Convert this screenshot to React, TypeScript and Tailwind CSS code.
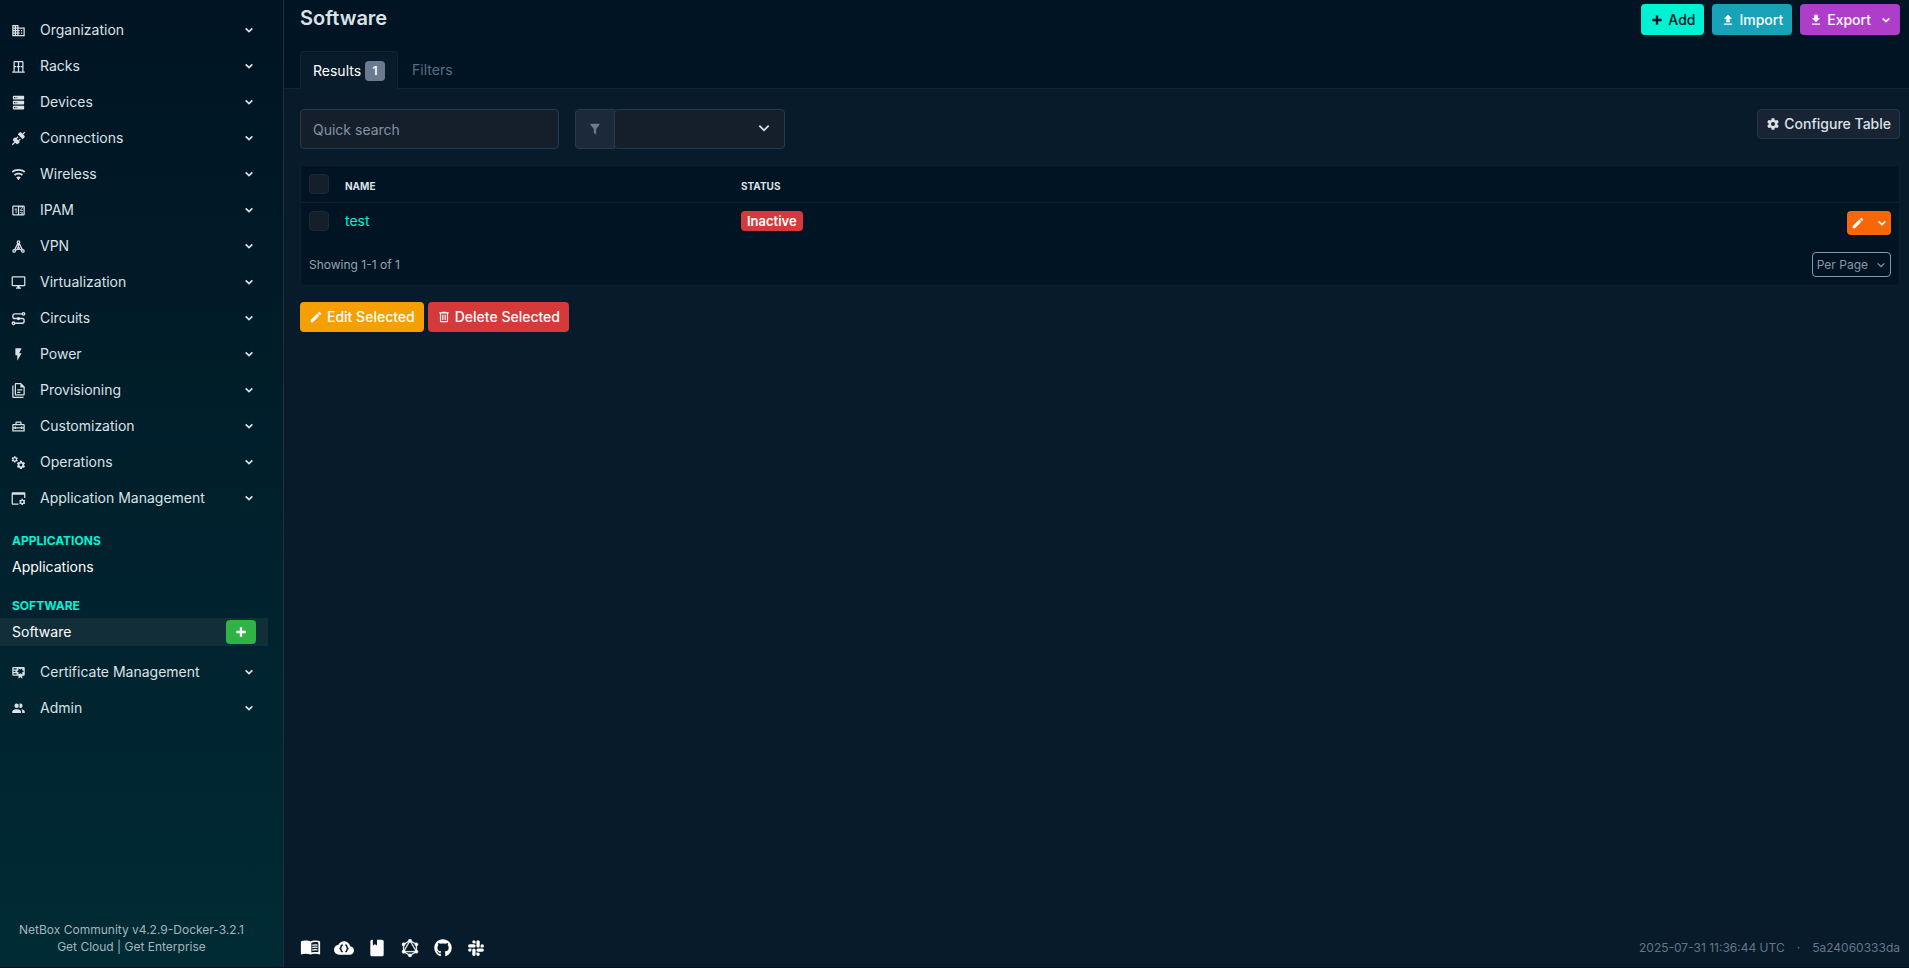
import React from 'react';
import { SiGraphql } from 'react-icons/si';
import { FaGithub, FaSlack } from 'react-icons/fa';

const COG =
  'M12,15.5A3.5,3.5 0 0,1 8.5,12A3.5,3.5 0 0,1 12,8.5A3.5,3.5 0 0,1 15.5,12A3.5,3.5 0 0,1 12,15.5M19.43,12.97C19.47,12.65 19.5,12.33 19.5,12C19.5,11.67 19.47,11.34 19.43,11L21.54,9.37C21.73,9.22 21.78,8.95 21.66,8.73L19.66,5.27C19.54,5.05 19.27,4.96 19.05,5.05L16.56,6.05C16.04,5.66 15.5,5.32 14.87,5.07L14.5,2.42C14.46,2.18 14.25,2 14,2H10C9.75,2 9.54,2.18 9.5,2.42L9.13,5.07C8.5,5.32 7.96,5.66 7.44,6.05L4.95,5.05C4.73,4.96 4.46,5.05 4.34,5.27L2.34,8.73C2.21,8.95 2.27,9.22 2.46,9.37L4.57,11C4.53,11.34 4.5,11.67 4.5,12C4.5,12.33 4.53,12.65 4.57,12.97L2.46,14.63C2.27,14.78 2.21,15.05 2.34,15.27L4.34,18.73C4.46,18.95 4.73,19.03 4.95,18.95L7.44,17.94C7.96,18.34 8.5,18.68 9.13,18.93L9.5,21.58C9.54,21.82 9.75,22 10,22H14C14.25,22 14.46,21.82 14.5,21.58L14.87,18.93C15.5,18.67 16.04,18.34 16.56,17.94L19.05,18.95C19.27,19.03 19.54,18.95 19.66,18.73L21.66,15.27C21.78,15.05 21.73,14.78 21.54,14.63L19.43,12.97Z';

const icons: Record<string, React.ReactNode> = {
  domain: <path d="M18,15H16V17H18M18,11H16V13H18M20,19H12V17H14V15H12V13H14V11H12V9H20M10,7H8V5H10M10,11H8V9H10M10,15H8V13H10M10,19H8V17H10M6,7H4V5H6M6,11H4V9H6M6,15H4V13H6M6,19H4V17H6M12,7V3H2V21H22V7H12Z" />,
  rack: <path fillRule="evenodd" d="M2 20H4V5C4 3.9 4.9 3 6 3H18C19.1 3 20 3.9 20 5V20H22V22H2V20M6 5V11H8V13H6V20H11V13H9V11H11V5H6M13 5V11H15V13H13V20H18V13H16V11H18V5H13Z" />,
  server: <path d="M4,1H20A1,1 0 0,1 21,2V6A1,1 0 0,1 20,7H4A1,1 0 0,1 3,6V2A1,1 0 0,1 4,1M4,9H20A1,1 0 0,1 21,10V14A1,1 0 0,1 20,15H4A1,1 0 0,1 3,14V10A1,1 0 0,1 4,9M4,17H20A1,1 0 0,1 21,18V22A1,1 0 0,1 20,23H4A1,1 0 0,1 3,22V18A1,1 0 0,1 4,17M9,5H10V3H9V5M9,13H10V11H9V13M9,21H10V19H9V21M5,3V5H7V3H5M5,11V13H7V11H5M5,19V21H7V19H5Z" />,
  connection: <path d="M21.4 7.5C22.2 8.3 22.2 9.6 21.4 10.3L18.6 13.1L10.8 5.3L13.6 2.5C14.4 1.7 15.7 1.7 16.4 2.5L18.2 4.3L21.2 1.3L22.6 2.7L19.6 5.7L21.4 7.5M15.6 13.3L14.2 11.9L11.4 14.7L9.3 12.6L12.1 9.8L10.7 8.4L7.9 11.2L6.4 9.8L3.6 12.6C2.8 13.4 2.8 14.7 3.6 15.4L5.4 17.2L1.4 21.2L2.8 22.6L6.8 18.6L8.6 20.4C9.4 21.2 10.7 21.2 11.4 20.4L14.2 17.6L12.8 16.2L15.6 13.3Z" />,
  wifi: <path d="M12,21L15.6,16.2C14.6,15.45 13.35,15 12,15C10.65,15 9.4,15.45 8.4,16.2L12,21M12,3C7.95,3 4.21,4.34 1.2,6.6L3,9C5.5,7.12 8.62,6 12,6C15.38,6 18.5,7.12 21,9L22.8,6.6C19.79,4.34 16.05,3 12,3M12,9C9.3,9 6.81,9.89 4.8,11.4L6.6,13.8C8.1,12.67 9.97,12 12,12C14.03,12 15.9,12.67 17.4,13.8L19.2,11.4C17.19,9.89 14.7,9 12,9Z" />,
  counter: <path d="M4,4H20A2,2 0 0,1 22,6V18A2,2 0 0,1 20,20H4A2,2 0 0,1 2,18V6A2,2 0 0,1 4,4M4,6V18H11V6H4M20,18V6H18.76C19,6.54 18.95,7.07 18.95,7.13C18.88,7.8 18.41,8.5 18.24,8.75L15.91,11.3L19.23,11.28L19.24,12.5L14.04,12.47L14,11.47C14,11.47 17.05,8.24 17.2,7.95C17.34,7.67 17.91,6 16.5,6C15.27,6.05 15.41,7.3 15.41,7.3L13.87,7.31C13.87,7.31 13.88,6.65 14.25,6H13V18H15.58L15.57,17.14L16.54,17.13C16.54,17.13 17.45,16.97 17.46,16.08C17.5,15.08 16.65,15.08 16.5,15.08C16.37,15.08 15.43,15.13 15.43,15.95H13.91C13.91,15.95 13.95,13.89 16.5,13.89C19.1,13.89 18.96,15.91 18.96,15.91C18.96,15.91 19,17.16 17.85,17.63L18.37,18H20M8.92,16H7.42V10.2L5.62,10.76V9.53L8.76,8.41H8.92V16Z" />,
  graph: (
    <g fill="none" stroke="currentColor" strokeWidth="2">
      <circle cx="12" cy="5" r="2" />
      <circle cx="5" cy="19" r="2" />
      <circle cx="12" cy="15" r="1.5" />
      <circle cx="19" cy="19" r="2" />
      <path d="M11 7L6 17M13 7L18 17M12 7V13.5M10.500 16L7 18.500M13.500 16L17 18.500" />
    </g>
  ),
  monitor: <path d="M21,16H3V4H21M21,2H3C1.89,2 1,2.89 1,4V16A2,2 0 0,0 3,18H10V20H8V22H16V20H14V18H21A2,2 0 0,0 23,16V4C23,2.89 22.1,2 21,2Z" />,
  transit: (
    <g fill="none" stroke="currentColor" strokeWidth="2.2">
      <circle cx="20" cy="4.5" r="2" />
      <circle cx="4" cy="19.5" r="2" />
      <circle cx="12" cy="12" r="1.5" />
      <path d="M18 4.5H6A3 3 0 0 0 3 7.5V9A3 3 0 0 0 6 12H18A3 3 0 0 1 21 15V16.5A3 3 0 0 1 18 19.5H6" />
    </g>
  ),
  flash: <path d="M7,2V13H10V22L17,10H13L17,2H7Z" />,
  documents: <path d="M16 0H8C6.9 0 6 .9 6 2V18C6 19.1 6.9 20 8 20H20C21.1 20 22 19.1 22 18V6L16 0M20 18H8V2H15V7H20V18M4 4V22H20V24H4C2.9 24 2 23.1 2 22V4H4M10 10V12H18V10H10M10 14V16H15V14H10Z" />,
  toolbox: <path d="M20 8H17V6C17 4.9 16.11 4 15 4H9C7.9 4 7 4.9 7 6V8H4C2.9 8 2 8.9 2 10V20H22V10C22 8.9 21.11 8 20 8M9 6H15V8H9V6M20 18H4V15H6V16H8V15H16V16H18V15H20V18M18 13V12H16V13H8V12H6V13H4V10H20V13H18Z" />,
  cogs: (
    <>
      <path transform="translate(0 1) scale(.5)" d={COG} />
      <path transform="translate(8 8) scale(.66)" d={COG} />
    </>
  ),
  appCog: (
    <>
      <path d="M21 2H3C1.9 2 1 2.9 1 4V20C1 21.1 1.9 22 3 22H12V20H3V6H21V11H23V4C23 2.9 22.1 2 21 2Z" />
      <path transform="translate(12 11.5) scale(.5)" d={COG} />
    </>
  ),
  certificate: <path d="M4,3C2.89,3 2,3.89 2,5V15A2,2 0 0,0 4,17H12V22L15,19L18,22V17H20A2,2 0 0,0 22,15V8L22,6V5A2,2 0 0,0 20,3H16V3H4M12,5L15,7L18,5V8.5L21,10L18,11.5V15L15,13L12,15V11.5L9,10L12,8.5V5M4,5H9V7H4V5M4,9H7V11H4V9M4,13H9V15H4V13Z" />,
  accounts: <path d="M16 17V19H2V17S2 13 9 13 16 17 16 17M12.5 7.5A3.5 3.5 0 1 0 9 11A3.5 3.5 0 0 0 12.5 7.5M15.94 13A5.32 5.32 0 0 1 18 17V19H22V17S22 13.37 15.94 13M15 4A3.39 3.39 0 0 0 13.07 4.59A5 5 0 0 1 13.07 10.41A3.39 3.39 0 0 0 15 11A3.5 3.5 0 0 0 15 4Z" />,
  plus: <path d="M20 14H14V20H10V14H4V10H10V4H14V10H20V14Z" />,
  upload: <path d="M9,16V10H5L12,3L19,10H15V16H9M5,20V18H19V20H5Z" />,
  download: <path d="M5,20H19V18H5M19,9H15V3H9V9H5L12,16L19,9Z" />,
  pencil: <path d="M20.71,7.04C21.1,6.65 21.1,6 20.71,5.63L18.37,3.29C18,2.9 17.35,2.9 16.96,3.29L15.12,5.12L18.87,8.87M3,17.25V21H6.75L17.81,9.93L14.06,6.18L3,17.25Z" />,
  trash: <path d="M9,3V4H4V6H5V19A2,2 0 0,0 7,21H17A2,2 0 0,0 19,19V6H20V4H15V3H9M7,6H17V19H7V6M9,8V17H11V8H9M13,8V17H15V8H13Z" />,
  filter: <path d="M14,12V19.88C14.04,20.18 13.94,20.5 13.71,20.71C13.32,21.1 12.69,21.1 12.3,20.71L10.29,18.7C10.06,18.47 9.96,18.16 10,17.87V12H9.97L4.21,4.62C3.87,4.19 3.95,3.56 4.38,3.22C4.57,3.08 4.78,3 5,3H19C19.22,3 19.43,3.08 19.62,3.22C20.05,3.56 20.13,4.19 19.79,4.62L14.03,12H14Z" />,
  cog: <path d={COG} />,
  chevron: <path fill="none" stroke="currentColor" strokeWidth="4" d="M4 8L12 16L20 8" />,
  chevronThin: <path fill="none" stroke="currentColor" strokeWidth="3" d="M4 8L12 16L20 8" />,
  bookOpen: (
    <>
      <path fillRule="evenodd" d="M12 5C9.5 3.5 4 3.5 1 5V20C4 18.7 9 18.7 12 20C15 18.7 20 18.7 23 20V5C20 3.5 14.5 3.5 12 5M13 6.5C15 5.6 19 5.6 21 6.3V17.4C19 16.8 15 17 13 17.7V6.5Z" />
      <path fill="none" stroke="currentColor" strokeWidth="1.5" d="M14 9.5C16 8.8 18 8.8 20 9.2M14 12.2C16 11.5 18 11.5 20 11.9M14 14.9C16 14.2 18 14.2 20 14.6" />
    </>
  ),
  cloudBraces: (
    <>
      <path d="M19.35 10.04C18.67 6.59 15.64 4 12 4C9.11 4 6.61 5.64 5.36 8.04C2.34 8.36 0 10.91 0 14A6 6 0 0 0 6 20H19A5 5 0 0 0 24 15C24 12.36 21.95 10.22 19.35 10.04Z" />
      <path fill="none" stroke="#071b2a" strokeWidth="1.8" d="M10.5 8.5C8.5 8.5 8.5 9.5 8.5 10.5C8.5 12 8 12.5 6.5 12.5C8 12.5 8.5 13 8.5 14.5C8.5 15.5 8.5 16.5 10.5 16.5M13.5 8.5C15.5 8.5 15.5 9.5 15.5 10.5C15.5 12 16 12.5 17.5 12.5C16 12.5 15.5 13 15.5 14.5C15.5 15.5 15.5 16.5 13.5 16.5" />
    </>
  ),
  book: <path d="M18,22A2,2 0 0,0 20,20V4C20,2.89 19.1,2 18,2H12V9L9.5,7.5L7,9V2H6A2,2 0 0,0 4,4V20A2,2 0 0,0 6,22H18Z" />,
};

const Icon: React.FC<{ name: string; className?: string }> = ({ name, className = 'size-3.5' }) => (
  <svg viewBox="0 0 24 24" fill="currentColor" aria-hidden="true" className={`shrink-0 ${className}`}>
    {icons[name]}
  </svg>
);

const mainMenu = [
  { label: 'Organization', icon: 'domain' },
  { label: 'Racks', icon: 'rack' },
  { label: 'Devices', icon: 'server' },
  { label: 'Connections', icon: 'connection' },
  { label: 'Wireless', icon: 'wifi' },
  { label: 'IPAM', icon: 'counter' },
  { label: 'VPN', icon: 'graph' },
  { label: 'Virtualization', icon: 'monitor' },
  { label: 'Circuits', icon: 'transit' },
  { label: 'Power', icon: 'flash' },
  { label: 'Provisioning', icon: 'documents' },
  { label: 'Customization', icon: 'toolbox' },
  { label: 'Operations', icon: 'cogs' },
  { label: 'Application Management', icon: 'appCog' },
];

const bottomMenu = [
  { label: 'Certificate Management', icon: 'certificate' },
  { label: 'Admin', icon: 'accounts' },
];

const MenuItem: React.FC<{ label: string; icon: string }> = ({ label, icon }) => (
  <button type="button" className="flex h-9 w-full items-center gap-3.5 pr-[29px] pl-[11px] text-left">
    <Icon name={icon} className="size-[15px]" />
    <span className="flex-1">{label}</span>
    <Icon name="chevron" className="size-2.5" />
  </button>
);

const App: React.FC = () => {
  return (
    <div className="flex h-screen overflow-hidden border-b border-[#00101c] bg-[#071b2a] font-[Inter,sans-serif] text-sm leading-5 text-[#dce1e7]">
      {/* Sidebar */}
      <aside className="flex w-[284px] shrink-0 flex-col border-r border-[#1f2e41] bg-linear-to-b from-[#001423] to-[#002b35]">
        <nav className="pt-3">
          {mainMenu.map((item) => (
            <MenuItem key={item.label} {...item} />
          ))}
          <div className="pt-[17px] pr-[15px] pb-2 text-white">
            <h2 className="px-3 text-xs leading-4 font-bold text-[#00f2d4]">APPLICATIONS</h2>
            <a href="#applications" className="mt-1 flex h-7 items-center px-3">Applications</a>
            <h2 className="mt-[17px] px-3 text-xs leading-4 font-bold text-[#00f2d4]">SOFTWARE</h2>
            <div className="mt-1 flex h-7 items-center justify-between bg-[#122e39] px-3">
              <a href="#software">Software</a>
              <button type="button" aria-label="Add software" className="flex h-6 w-[30px] items-center justify-center rounded bg-[#2fb344]">
                <Icon name="plus" />
              </button>
            </div>
          </div>
          {bottomMenu.map((item) => (
            <MenuItem key={item.label} {...item} />
          ))}
        </nav>
        <div className="mt-auto pr-5 pb-3 text-center text-xs leading-[17px] text-[#a5b4bc]">
          <p>NetBox Community v4.2.9-Docker-3.2.1</p>
          <p>
            <a href="#cloud">Get Cloud</a> | <a href="#enterprise">Get Enterprise</a>
          </p>
        </div>
      </aside>

      <div className="flex min-w-0 flex-1 flex-col">
        {/* Page header */}
        <header className="border-b border-[#0f2434] bg-[#001423] pr-[9px] pl-4">
          <div className="flex items-start justify-between pt-1">
            <h1 className="text-xl leading-7 font-semibold">Software</h1>
            <div className="flex gap-2 font-medium text-white">
              <button type="button" className="flex h-[31px] items-center gap-1 rounded bg-[#00f2d4] px-[9px] text-[#001423]">
                <Icon name="plus" />
                Add
              </button>
              <button type="button" className="flex h-[31px] items-center gap-1 rounded bg-[#17a2b8] px-[9px]">
                <Icon name="upload" />
                Import
              </button>
              <button type="button" className="flex h-[31px] items-center gap-1 rounded bg-[#ae3ec9] px-[9px]">
                <Icon name="download" />
                Export
                <Icon name="chevron" className="ml-1.5 size-2.5" />
              </button>
            </div>
          </div>
          <div className="mt-4 -mb-px flex" role="tablist">
            <button type="button" role="tab" aria-selected="true" className="flex h-[38px] items-center gap-1 rounded-t border border-b-0 border-[#0f2434] bg-[#071b2a] px-3 text-white">
              Results
              <span className="flex size-5 items-center justify-center rounded bg-[#6c7a91] text-xs font-semibold">1</span>
            </button>
            <button type="button" role="tab" aria-selected="false" className="px-3.5 text-[#5d6c83]">Filters</button>
          </div>
        </header>

        {/* Table controls */}
        <main className="flex-1 pt-5 pr-[9px] pl-4">
          <div className="flex items-start">
            <input aria-label="Quick search" placeholder="Quick search" className="h-10 w-[259px] rounded border border-[#25384f] bg-[#151f2c] px-3 placeholder:text-[#8491a5]" />
            <div className="ml-4 flex h-10 w-[210px]">
              <label htmlFor="saved-filter" aria-label="Saved filter" className="flex w-10 items-center justify-center rounded-l border border-[#25384f] bg-[#1b293a] text-[#6c7a91]">
                <Icon name="filter" />
              </label>
              <div className="relative -ml-px flex-1">
                <select id="saved-filter" aria-label="Saved filter" className="h-10 w-full appearance-none rounded border border-[#25384f] bg-[#151f2c]" />
                <Icon name="chevronThin" className="pointer-events-none absolute top-3 right-3.5 size-3.5" />
              </div>
            </div>
            <button type="button" className="ml-auto flex h-[30px] items-center gap-1 rounded border border-[#25384f] bg-[#182433] px-2 font-medium">
              <Icon name="cog" />
              Configure Table
            </button>
          </div>

          {/* Results table */}
          <section className="mt-4 rounded border border-[#0b1f2f] bg-[#001423]">
            <table className="w-full table-fixed">
              <colgroup>
                <col className="w-9" />
                <col className="w-[396px]" />
                <col />
                <col className="w-20" />
              </colgroup>
              <thead>
                <tr className="h-9 border-b border-[#0c2234] text-left text-[10px]">
                  <th className="pl-2">
                    <input type="checkbox" aria-label="Select all" className="block size-5 appearance-none rounded border border-[#1c2836] bg-[#151f2c]" />
                  </th>
                  <th className="pt-1 pl-2 font-bold">NAME</th>
                  <th className="pt-1 pl-2 font-bold">STATUS</th>
                  <th />
                </tr>
              </thead>
              <tbody>
                <tr className="h-[42px] align-top">
                  <td className="pt-2 pl-2">
                    <input type="checkbox" aria-label="Select test" className="block size-5 appearance-none rounded border border-[#1c2836] bg-[#151f2c]" />
                  </td>
                  <td className="pt-2 pl-2">
                    <a href="#test" className="text-[#00f2d4]">test</a>
                  </td>
                  <td className="pt-2 pl-2">
                    <span className="inline-block rounded bg-[#d63939] px-1.5 text-[13px] font-semibold text-white">Inactive</span>
                  </td>
                  <td className="pt-2 pr-2">
                    <div className="ml-auto flex h-6 w-11 rounded bg-[#f76707] text-white">
                      <button type="button" aria-label="Edit" className="flex w-[22px] items-center justify-center">
                        <Icon name="pencil" />
                      </button>
                      <button type="button" aria-label="More actions" className="flex flex-1 items-center justify-center pl-1">
                        <Icon name="chevron" className="size-2.5" />
                      </button>
                    </div>
                  </td>
                </tr>
              </tbody>
            </table>
            <div className="flex items-center justify-between p-2 text-xs">
              <p className="text-[#97a3b0]">Showing 1-1 of 1</p>
              <button type="button" className="flex h-[25px] items-center gap-2 rounded border border-[#8a97ab] px-1 text-[#8a97ab]">
                Per Page
                <Icon name="chevronThin" className="size-2.5" />
              </button>
            </div>
          </section>

          <div className="mt-4 flex gap-1 font-medium text-white">
            <button type="button" className="flex h-[30px] items-center gap-1 rounded bg-[#f59f00] px-[9px]">
              <Icon name="pencil" />
              Edit Selected
            </button>
            <button type="button" className="flex h-[30px] items-center gap-1 rounded bg-[#d63939] px-[9px]">
              <Icon name="trash" />
              Delete Selected
            </button>
          </div>
        </main>

        {/* Footer */}
        <footer className="flex items-center justify-between pr-[9px] pb-[9px] pl-4">
          <div className="flex items-center gap-[13px] text-white">
            <a href="#docs" aria-label="Docs"><Icon name="bookOpen" className="size-[21px]" /></a>
            <a href="#api" aria-label="REST API"><Icon name="cloudBraces" className="size-5" /></a>
            <a href="#api-docs" aria-label="REST API documentation"><Icon name="book" className="size-5" /></a>
            <a href="#graphql" aria-label="GraphQL API"><SiGraphql stroke="currentColor" strokeWidth="0.6" className="size-5 p-px" /></a>
            <a href="#source" aria-label="Source code"><FaGithub className="size-5 p-px" /></a>
            <a href="#community" aria-label="Community"><FaSlack className="size-5 p-px" /></a>
          </div>
          <div className="flex gap-3 text-xs text-[#66758c]">
            <span>2025-07-31 11:36:44 UTC</span>
            <span>·</span>
            <span>5a24060333da</span>
          </div>
        </footer>
      </div>
    </div>
  );
};

export default App;
